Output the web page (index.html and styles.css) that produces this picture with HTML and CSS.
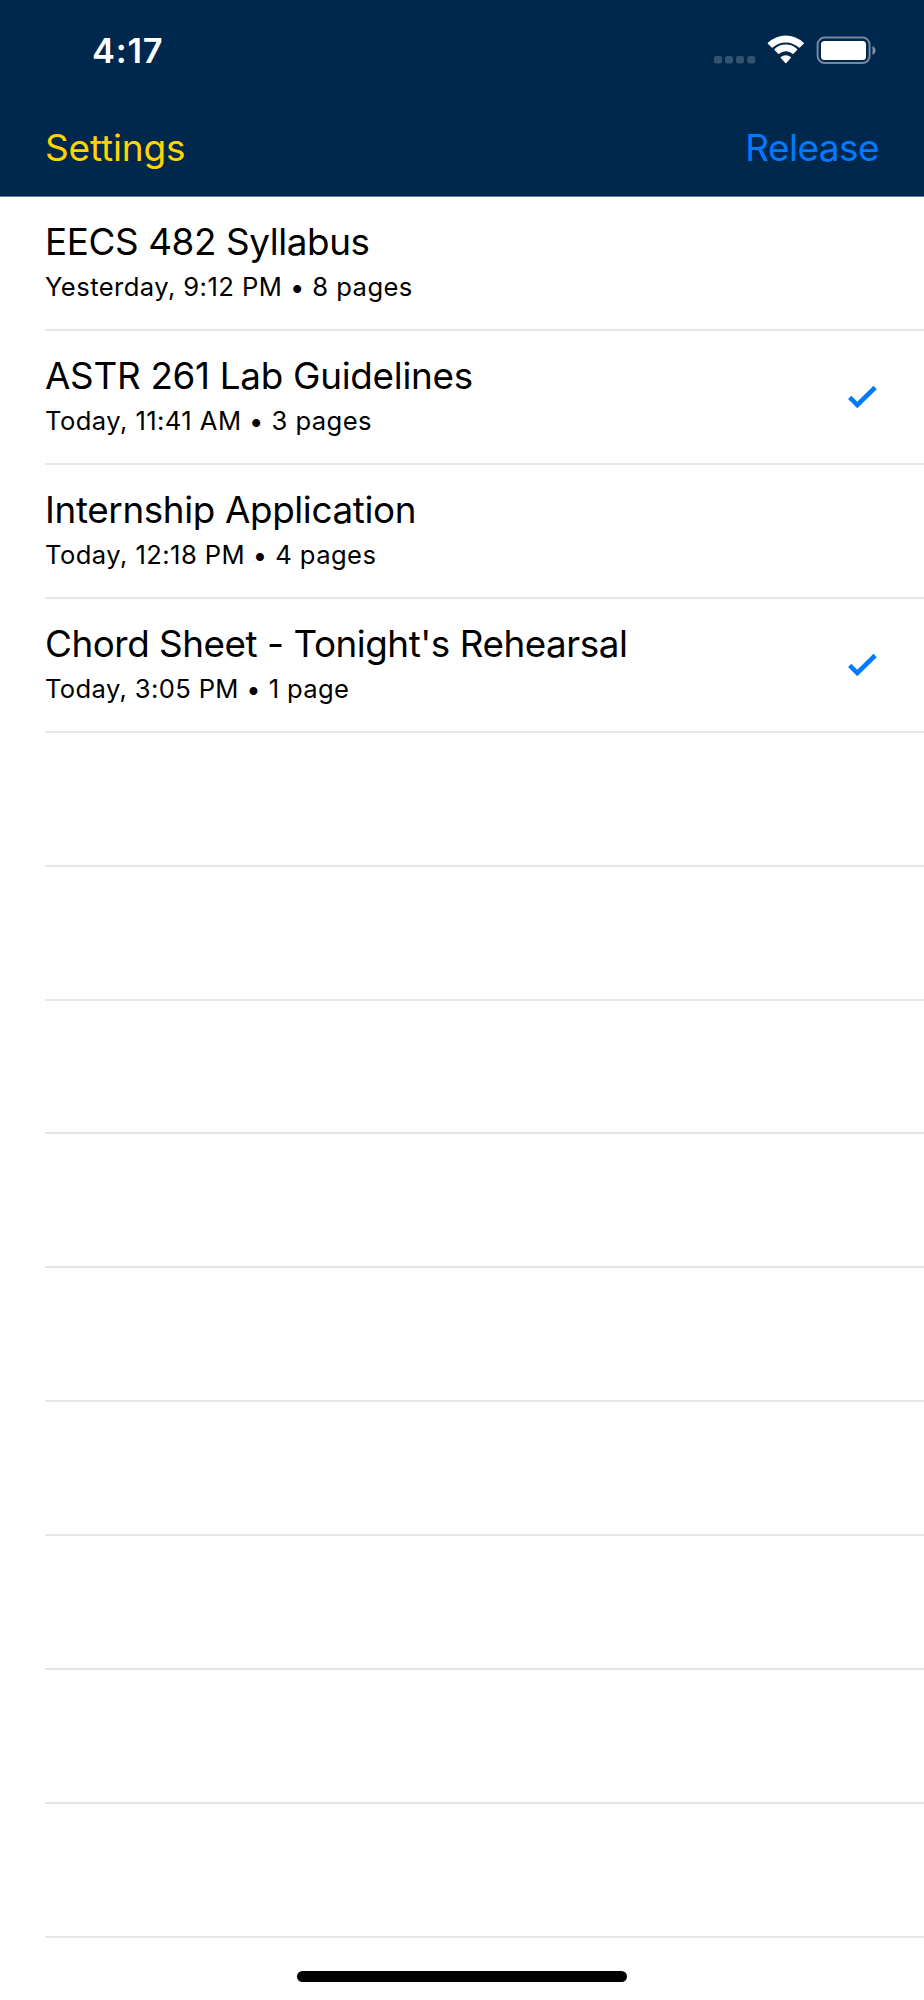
FILE: index.html
```html
<!DOCTYPE html>
<html lang="en">
<head>
<meta charset="utf-8">
<title>Print queue</title>
<link rel="stylesheet" href="styles.css">
</head>
<body>
<div class="screen">
  <header class="header">
    <div class="status">
      <span class="time">4:17</span>
      <svg class="indicators" width="164" height="32" viewBox="712 34 164 32" aria-hidden="true">
        <g fill="#fff" fill-opacity=".2">
          <rect x="714" y="56" width="8" height="7.5" rx="2.2"/>
          <rect x="725" y="56" width="8" height="7.5" rx="2.2"/>
          <rect x="736" y="56" width="8" height="7.5" rx="2.2"/>
          <rect x="747.2" y="56" width="8" height="7.5" rx="2.2"/>
        </g>
        <g fill="#fff">
          <path d="M785.8 42.4c5 0 9.6 2 13.1 5.2q.5.4 1 0l3.800-3.800q.5-.6 0-1.100a26 26 0 0 0-35.800 0q-.5.5 0 1.100l3.800 3.800q.5.4 1 0a19 19 0 0 1 13.100-5.200z"/>
          <path d="M785.800 51.200c2.500 0 4.900.9 6.700 2.600q.5.500 1 0l3.600-3.700q.6-.6 0-1.100a16.500 16.500 0 0 0-22.600 0q-.6.5 0 1.100l3.600 3.700q.5.500 1 0a9.800 9.800 0 0 1 6.700-2.600z"/>
          <path d="M790.800 58.100q.5-.5 0-1a7.600 7.600 0 0 0-10 0q-.5.5 0 1l4.500 4.800q.5.500 1 0z"/>
          <rect x="821" y="41" width="45" height="19" rx="3.5"/>
        </g>
        <rect x="817.600" y="37.600" width="52" height="25.400" rx="7" fill="none" stroke="#fff" stroke-opacity=".45" stroke-width="2"/>
        <path d="M872.500 46v8.800c1.800-.7 3-2.400 3-4.400s-1.200-3.700-3-4.400z" fill="#fff" fill-opacity=".5"/>
      </svg>
    </div>
    <nav class="nav">
      <span class="settings">Settings</span>
      <span class="release">Release</span>
    </nav>
  </header>
  <main class="list">
    <div class="row">
      <div class="text"><div class="title"><span class="t1">EECS 482 Syllabus</span></div><div class="meta">Yesterday, 9:12 PM • 8 pages</div></div>
    </div>
    <div class="row">
      <div class="text"><div class="title"><span class="t2">ASTR 261 Lab Guidelines</span></div><div class="meta">Today, 11:41 AM • 3 pages</div></div>
      <svg class="check" width="30" height="24" viewBox="847 385 30 24"><path d="M849.700 397.300l7.600 7.700 17.800-17.500" fill="none" stroke="#007aff" stroke-width="4.600"/></svg>
    </div>
    <div class="row">
      <div class="text"><div class="title"><span class="t3">Internship Application</span></div><div class="meta">Today, 12:18 PM • 4 pages</div></div>
    </div>
    <div class="row">
      <div class="text"><div class="title"><span class="t4">Chord Sheet - Tonight's Rehearsal</span></div><div class="meta m4">Today, 3:05 PM • 1 page</div></div>
      <svg class="check" width="30" height="24" viewBox="847 385 30 24"><path d="M849.700 397.300l7.600 7.700 17.800-17.500" fill="none" stroke="#007aff" stroke-width="4.600"/></svg>
    </div>
    <div class="row"></div>
    <div class="row"></div>
    <div class="row"></div>
    <div class="row"></div>
    <div class="row"></div>
    <div class="row"></div>
    <div class="row"></div>
    <div class="row"></div>
    <div class="row"></div>
  </main>
  <footer class="footer"><div class="home"></div></footer>
</div>
</body>
</html>
```
FILE: styles.css
```css
* { box-sizing: border-box; }
body {
  margin: 0;
  background: #fff;
  font-family: Inter, Roboto, sans-serif;
  color: #000;
}
.screen {
  width: 924px;
  height: 2000px;
  overflow: hidden;
  display: flex;
  flex-direction: column;
}
.header {
  height: 197px;
  flex: none;
  background: #00274c;
  border-bottom: 1px solid #667d94;
}
.status {
  height: 98px;
  padding: 30px 48px 0 92px;
  display: flex;
  justify-content: space-between;
}
.time {
  font-size: 34.400px;
  font-weight: 600;
  line-height: 41px;
  letter-spacing: 0.8px;
  color: #fff;
}
.indicators { margin-top: 4px; }
.nav {
  height: 98px;
  padding: 28px 45px 0 45px;
  display: flex;
  justify-content: space-between;
  font-size: 37px;
  line-height: 44px;
}
.settings {
  color: #ffd400;
  letter-spacing: -0.160px;
}
.release {
  color: #007aff;
  letter-spacing: -0.550px;
}
.list {
  margin-left: 45px;
  flex: none;
}
.row {
  height: 133.930px;
  border-bottom: 2px solid #e6e6e6;
  display: flex;
  justify-content: space-between;
  white-space: nowrap;
}
.text { padding-top: 23px; }
.title {
  font-size: 36.800px;
  line-height: 44px;
}
.t1 { letter-spacing: -0.380px; }
.t2 { letter-spacing: -0.280px; }
.t3 { letter-spacing: -0.360px; }
.t4 { letter-spacing: -0.450px; }
.meta {
  font-size: 25.600px;
  line-height: 32px;
  margin-top: 7px;
  letter-spacing: 0.430px;
}
.m4 { letter-spacing: 0.350px; }
.check { margin: 54px 47px 0 0; }
.footer {
  padding-top: 33px;
  display: flex;
  justify-content: center;
}
.home {
  width: 330px;
  height: 11px;
  border-radius: 6px;
  background: #000;
}
```
